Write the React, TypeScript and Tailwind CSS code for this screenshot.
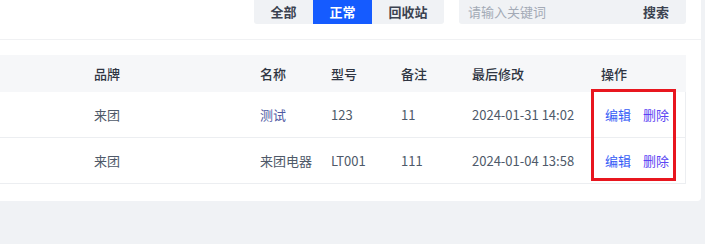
const rows = [
  { brand: "来团", name: "测试", model: "123", note: "11", updated: "2024-01-31 14:02" },
  { brand: "来团", name: "来团电器", model: "LT001", note: "111", updated: "2024-01-04 13:58" },
];

const cols = "grid grid-cols-[94px_166px_71px_70px_71px_129px_85px]";

export default function App() {
  return (
    <div
      className="min-h-[244px] w-[705px] bg-[#f0f2f5] pr-[4px] text-[13px]"
      style={{ fontFamily: '"Noto Sans CJK SC", "Noto Sans", sans-serif' }}
    >
      <div className="h-[201px] rounded-br-[4px] bg-white">
        {/* toolbar */}
        <div className="flex h-[40px] items-start justify-end gap-[15px] border-b border-[#f0f1f3] pr-[15px]">
          <div className="flex h-6 overflow-hidden rounded-b-[3px] bg-[#f0f2f5] font-bold leading-[20px]">
            <button className="w-[59px] text-[#3b4250]">全部</button>
            <button className="w-[59px] bg-[#155bff] text-white">正常</button>
            <button className="w-[72px] text-[#3b4250]">回收站</button>
          </div>
          <div className="flex h-6 w-[227px] rounded-b-[3px] bg-[#f0f2f5] leading-[20px]">
            <input
              placeholder="请输入关键词"
              className="min-w-0 flex-1 bg-transparent pl-[9px] text-[#3b4250] outline-none placeholder:text-[#a3aab6]"
            />
            <button className="w-[60px] font-bold text-[#3b4250]">搜索</button>
          </div>
        </div>

        {/* table */}
        <div className="relative mt-[15px] w-[686px]">
          <div className={`${cols} h-[37px] items-center bg-[#f6f7f9] font-medium text-[#2f3542]`}>
            <div />
            <div>品牌</div>
            <div>名称</div>
            <div>型号</div>
            <div>备注</div>
            <div>最后修改</div>
            <div>操作</div>
          </div>
          {rows.map((r) => (
            <div
              key={r.updated}
              className={`${cols} h-[46px] items-center border-b border-r border-[#eceef1] text-[#4e5969]`}
            >
              <div />
              <div>{r.brand}</div>
              <div className={r.name === "测试" ? "text-[#4f5aa3]" : ""}>{r.name}</div>
              <div>{r.model}</div>
              <div>{r.note}</div>
              <div>{r.updated}</div>
              <div className="flex gap-[12px] pl-[4px]">
                <a className="cursor-pointer text-[#355cf6]">编辑</a>
                <a className="cursor-pointer text-[#5b45f3]">删除</a>
              </div>
            </div>
          ))}
          <div className="pointer-events-none absolute left-[591px] top-[34px] h-[92px] w-[85px] border-[3px] border-[#e8161f]" />
        </div>
      </div>
    </div>
  );
}
